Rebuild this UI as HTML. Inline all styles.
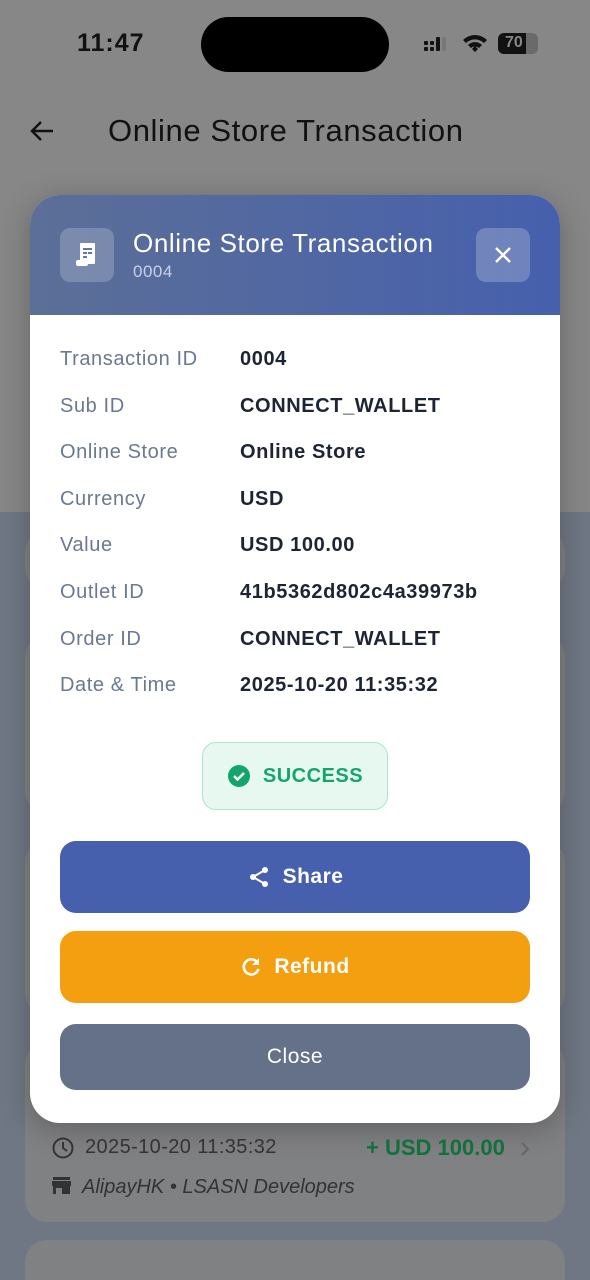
<!DOCTYPE html>
<html style="background:#6f7784"><head><meta charset="utf-8"><style>
*{box-sizing:border-box;margin:0;padding:0}
html,body{width:590px;height:1280px;overflow:hidden}
body{font-family:"Liberation Sans",sans-serif;background:#6f7784;position:relative}
.top{position:absolute;left:0;top:0;width:590px;height:512px;background:#878787}
.bcard{position:absolute;left:25px;width:540px;background:#808183;border-radius:22px}
.abs{position:absolute}
.modal{position:absolute;left:30px;top:195px;width:530px;height:928px;background:#fff;border-radius:30px;overflow:hidden;box-shadow:0 6px 30px rgba(0,0,0,.25)}
.hdr{height:120px;background:linear-gradient(90deg,#5c6f97,#4660ad)}
.row{position:absolute;left:30px;font-size:20px}
.row .l{position:absolute;left:0;color:#6b7891;white-space:nowrap;letter-spacing:.6px}
.row .v{position:absolute;left:180px;color:#1d2433;font-weight:bold;white-space:nowrap;letter-spacing:.6px}
.btn{position:absolute;left:30px;width:470px;border-radius:16px;color:#fff;font-size:21px;display:flex;align-items:center;justify-content:center;gap:12px;letter-spacing:.5px}
</style></head><body>
<div class="top"></div>
<div class="bcard" style="top:530px;height:60px"></div>
<div class="bcard" style="top:635px;height:178px"></div>
<div class="bcard" style="top:840px;height:175px"></div>
<div class="bcard" style="top:1042px;height:180px"></div>
<div class="bcard" style="top:1240px;height:60px"></div>

<div class="abs" style="left:77px;top:29px;font-size:25px;font-weight:bold;color:#111;letter-spacing:1px">11:47</div>
<div class="abs" style="left:201px;top:17px;width:188px;height:55px;background:#000;border-radius:28px"></div>
<svg class="abs" style="left:424px;top:37px" width="24" height="16"><g fill="#111"><rect x="0" y="4" width="4" height="4" rx="1"/><rect x="0" y="10" width="4" height="4" rx="1"/><rect x="6" y="4" width="4" height="4" rx="1"/><rect x="6" y="10" width="4" height="4" rx="1"/><rect x="12" y="0" width="4" height="14" rx="1"/><rect x="18" y="0" width="4" height="14" rx="1" fill="#777"/></g></svg>
<svg class="abs" style="left:462px;top:33px" width="26" height="20" viewBox="0 0 26 20"><path d="M1 7a17 17 0 0 1 24 0l-3 3a13 13 0 0 0-18 0zM6 12a10 10 0 0 1 14 0l-3 3a6 6 0 0 0-8 0zM10 16l3-3 3 3-3 3z" fill="#111"/></svg>
<div class="abs" style="left:498px;top:33px;width:40px;height:21px;background:#6a6a6a;border-radius:6px;overflow:hidden"><div style="width:28px;height:21px;background:#111"></div><span style="position:absolute;left:7px;top:1px;font-size:16px;font-weight:bold;color:#888">70</span></div>

<svg class="abs" style="left:28px;top:117px" width="28" height="28" viewBox="0 0 28 28"><path d="M25 14H4M13 5l-9 9 9 9" stroke="#111" stroke-width="2.5" fill="none"/></svg>
<div class="abs" style="left:108px;top:113px;font-size:31px;color:#111;letter-spacing:.6px">Online Store Transaction</div>

<div class="modal">
<div class="hdr"></div>
<div class="abs" style="left:30px;top:33px;width:54px;height:54px;border-radius:10px;background:rgba(255,255,255,.2)"></div>
<svg class="abs" style="left:44px;top:46px" width="26" height="28" viewBox="0 0 26 28"><rect x="6" y="2" width="15" height="21" rx="1" fill="#fff"/><rect x="2" y="19" width="12" height="6" rx="2" fill="#fff"/><g fill="#6377a3"><rect x="9" y="7" width="9" height="2"/><rect x="9" y="11" width="4" height="2"/><rect x="14" y="11" width="4" height="2"/><rect x="9" y="15" width="4" height="2"/></g></svg>
<div class="abs" style="left:103px;top:33px;font-size:26px;color:#fff;letter-spacing:.6px">Online Store Transaction</div>
<div class="abs" style="left:103px;top:67px;font-size:17px;color:#c9d1e6;letter-spacing:.5px">0004</div>
<div class="abs" style="left:446px;top:33px;width:54px;height:54px;border-radius:10px;background:rgba(255,255,255,.22)"></div>
<svg class="abs" style="left:463px;top:50px" width="20" height="20" viewBox="0 0 20 20"><path d="M3 3l14 14M17 3L3 17" stroke="#fff" stroke-width="2.4"/></svg>

<div class="row" style="top:153px"><span class="l">Transaction ID</span><span class="v">0004</span></div>
<div class="row" style="top:200px"><span class="l">Sub ID</span><span class="v">CONNECT_WALLET</span></div>
<div class="row" style="top:246px"><span class="l">Online Store</span><span class="v">Online Store</span></div>
<div class="row" style="top:293px"><span class="l">Currency</span><span class="v">USD</span></div>
<div class="row" style="top:339px"><span class="l">Value</span><span class="v">USD 100.00</span></div>
<div class="row" style="top:386px"><span class="l">Outlet ID</span><span class="v">41b5362d802c4a39973b</span></div>
<div class="row" style="top:433px"><span class="l">Order ID</span><span class="v">CONNECT_WALLET</span></div>
<div class="row" style="top:479px"><span class="l">Date &amp; Time</span><span class="v">2025-10-20 11:35:32</span></div>

<div class="abs" style="left:172px;top:547px;width:186px;height:68px;border:1.5px solid #a9e4cc;background:#e7f8f1;border-radius:14px;display:flex;align-items:center;justify-content:center;gap:12px;color:#14a56f;font-size:20px;font-weight:bold;letter-spacing:.5px">
<svg width="24" height="24" viewBox="0 0 24 24"><circle cx="12" cy="12" r="11" fill="#14a56f"/><path d="M7 12l3.5 3.5L17 9" stroke="#fff" stroke-width="2.5" fill="none"/></svg>SUCCESS</div>

<div class="btn" style="top:646px;height:72px;background:#4660ae;font-weight:bold">
<svg width="24" height="24" viewBox="0 0 24 24"><circle cx="18" cy="5" r="3" fill="#fff"/><circle cx="6" cy="12" r="3" fill="#fff"/><circle cx="18" cy="19" r="3" fill="#fff"/><path d="M18 5L6 12l12 7" stroke="#fff" stroke-width="2" fill="none"/></svg>Share</div>
<div class="btn" style="top:736px;height:72px;background:#f39f0f;font-weight:bold">
<svg width="22" height="22" viewBox="0 0 22 22"><path d="M17 6A7.5 7.5 0 1 0 18.5 13" stroke="#fff" stroke-width="2.6" fill="none"/><path d="M19 2v7h-7z" fill="#fff"/></svg>Refund</div>
<div class="btn" style="top:829px;height:66px;background:#647189">Close</div>
</div>

<svg class="abs" style="left:51px;top:1136px" width="24" height="24" viewBox="0 0 24 24"><circle cx="12" cy="12" r="9.5" stroke="#333" stroke-width="2" fill="none"/><path d="M12 6v6l4 3" stroke="#333" stroke-width="2" fill="none"/></svg>
<div class="abs" style="left:85px;top:1136px;font-size:20px;color:#333;letter-spacing:.4px">2025-10-20 11:35:32</div>
<div class="abs" style="left:366px;top:1135px;font-size:22px;font-weight:bold;color:#12703d">+ USD 100.00</div>
<svg class="abs" style="left:518px;top:1140px" width="14" height="18" viewBox="0 0 14 18"><path d="M4 3l6 6-6 6" stroke="#666" stroke-width="2" fill="none"/></svg>
<svg class="abs" style="left:52px;top:1177px" width="20" height="18" viewBox="0 0 20 18"><rect x="1" y="0" width="17" height="3" fill="#333"/><rect x="0" y="4" width="19" height="5" fill="#333"/><rect x="1" y="9" width="17" height="8" fill="#333"/><rect x="4" y="11" width="6" height="6" fill="#808183"/></svg>
<div class="abs" style="left:82px;top:1176px;font-size:20px;font-style:italic;color:#333">AlipayHK • LSASN Developers</div>
</body></html>
